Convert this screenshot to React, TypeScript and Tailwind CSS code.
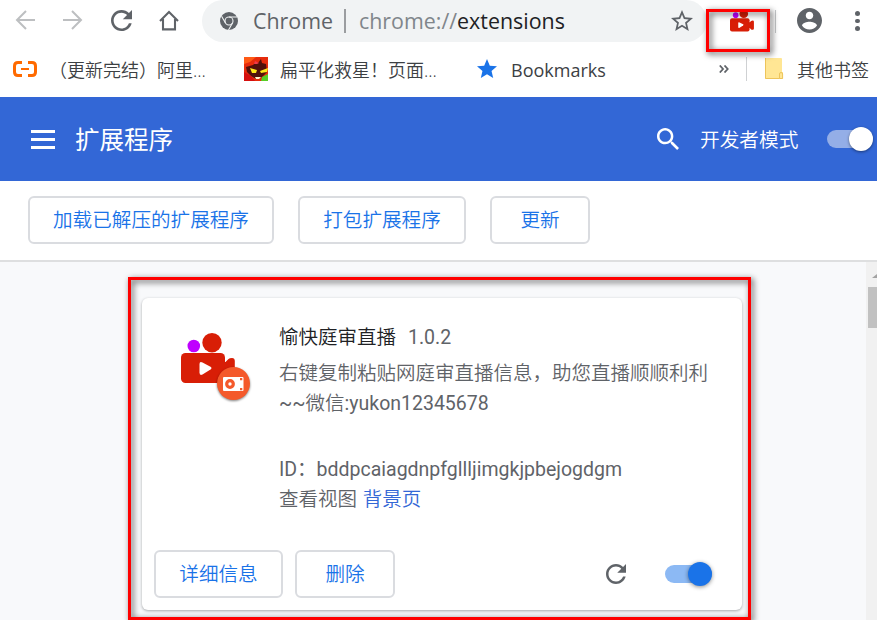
import React from 'react';

const CJK = "font-['Roboto','Noto_Sans_CJK_SC',sans-serif]";
const UI = "font-['Open_Sans','Noto_Sans_CJK_SC',sans-serif]";

function Camera({ className }: { className: string }) {
  return (
    <svg className={className} viewBox="0 0 54 50">
      <circle cx="12.8" cy="13" r="6.3" fill="#bf00ff" />
      <circle cx="31" cy="9.7" r="9.7" fill="#d81e06" />
      <rect x="0" y="20" width="44" height="30" rx="4.5" fill="#d81e06" />
      <path d="M42 29H44.5L47.5 26Q48.5 25 51 25Q53.8 25 53.8 28V43Q53.8 46 51 46Q48.5 46 47.5 45L44.5 42H42Z" fill="#d81e06" />
      <path d="M18.5 31Q18.5 28 21.5 29.4L29.5 33.7Q31.5 35 29.5 36.5L21.5 41.5Q18.5 43 18.5 39.5Z" fill="#fff" />
    </svg>
  );
}

function Reload({ className }: { className: string }) {
  return (
    <svg className={className} viewBox="4 4 16 16" fill="#5f6368">
      <path d="M17.65 6.35C16.2 4.9 14.21 4 12 4c-4.42 0-7.99 3.58-7.99 8s3.57 8 7.99 8c3.73 0 6.84-2.55 7.73-6h-2.08c-.82 2.33-3.04 4-5.65 4-3.31 0-6-2.69-6-6s2.69-6 6-6c1.66 0 3.14.69 4.22 1.78L13 11h7V4l-2.35 2.35z" />
    </svg>
  );
}

function Arrow({ className }: { className: string }) {
  return (
    <svg className={className} viewBox="0 0 20 20" fill="none" stroke="#bdbfc1" strokeWidth="2">
      <path d="M20 10H2M11 1L2 10L11 19" />
    </svg>
  );
}

function Toolbar() {
  return (
    <div className="relative flex h-[42px] w-full items-start">
      <Arrow className="ml-[15px] mt-[10px] h-5 w-5 shrink-0" />
      <Arrow className="ml-[28px] mt-[10px] h-5 w-5 shrink-0 rotate-180" />
      <Reload className="ml-[28px] mt-[10px] h-[21px] w-[21px] shrink-0" />
      <svg className="ml-[27px] mt-[10px] h-[21px] w-[20px] shrink-0" viewBox="0 0 20 21" fill="none" stroke="#5f6368" strokeWidth="2.1">
        <path d="M1 11L10 2L19 11M4 9V19.4H16V9" />
      </svg>
      <div className="ml-[23px] flex h-[42px] w-[505px] shrink-0 items-start rounded-r-[21px] rounded-l-[21px] bg-[#f1f3f4]">
        <svg className="ml-[18px] mt-[12px] h-[18px] w-[18px] shrink-0" viewBox="0 0 18 18">
          <circle cx="9" cy="9" r="9" fill="#5f6368" />
          <g fill="none" stroke="#f1f3f4" strokeWidth="1.1">
            <circle cx="9" cy="9" r="4" />
            <path d="M9 5H17M5.5 11L1.6 4.2M12.5 11L8.5 18" />
          </g>
        </svg>
        <span className={`${UI} ml-[15px] mt-[6px] w-[80px] shrink-0 whitespace-nowrap text-[21.4px] leading-[30px] text-[#5f6368]`}>Chrome</span>
        <div className="ml-[11px] mt-[9px] h-[24px] w-[2px] shrink-0 bg-[#9b9da0]" />
        <span className={`${UI} ml-[13px] mt-[6px] w-[220px] shrink-0 whitespace-nowrap text-[21.4px] leading-[30px] text-[#80868b]`}>
          chrome://<span className="text-[#202124]">extensions</span>
        </span>
        <svg className="ml-[92px] mt-[10px] h-[21px] w-[22px] shrink-0" viewBox="2 2 20 19" fill="#5f6368">
          <path d="M22 9.24l-7.19-.62L12 2 9.19 8.63 2 9.24l5.46 4.73L5.82 21 12 17.27 18.18 21l-1.63-7.03L22 9.24zM12 15.4l-3.76 2.27 1-4.28-3.32-2.88 4.38-.38L12 6.1l1.71 4.04 4.38.38-3.32 2.88 1 4.28L12 15.4z" />
        </svg>
      </div>
      <Camera className="ml-[23px] mt-[9px] h-[23px] w-[24px] shrink-0" />
      <div className="ml-[21px] mt-[10px] h-[23px] w-px shrink-0 bg-[#c6c8ca]" />
      <svg className="ml-[21px] mt-[8px] h-[25px] w-[25px] shrink-0" viewBox="2 2 20 20" fill="#5f6368">
        <path d="M12 2C6.48 2 2 6.48 2 12s4.48 10 10 10 10-4.48 10-10S17.52 2 12 2zm0 3c1.66 0 3 1.34 3 3s-1.34 3-3 3-3-1.34-3-3 1.34-3 3-3zm0 14.2c-2.5 0-4.71-1.28-6-3.22.03-1.99 4-3.08 6-3.08 1.99 0 5.97 1.09 6 3.08-1.29 1.94-3.5 3.22-6 3.22z" />
      </svg>
      <div className="ml-[33px] mt-[11px] flex shrink-0 flex-col gap-[3px]">
        <i className="h-[4.5px] w-[4.5px] rounded-full bg-[#5f6368]" />
        <i className="h-[4.5px] w-[4.5px] rounded-full bg-[#5f6368]" />
        <i className="h-[4.5px] w-[4.5px] rounded-full bg-[#5f6368]" />
      </div>
      <div className="absolute left-[706px] top-[9px] z-10 h-[43px] w-[64px] border-[3px] border-[#ff0000] drop-shadow-[2px_2px_3px_rgba(0,0,0,0.75)]" />
    </div>
  );
}

function Bookmarks() {
  const text = `${UI} shrink-0 whitespace-nowrap text-[18px] leading-[28px] text-[#3c4043]`;
  return (
    <div className="flex h-[55px] w-full items-start">
      <svg className="ml-[13px] mt-[19px] h-[16px] w-[24px] shrink-0" viewBox="0 0 24 16" fill="none" stroke="#ff6a00">
        <path d="M9 1.5H5Q1.5 1.5 1.5 5V11Q1.5 14.5 5 14.5H9M15 1.5H19Q22.5 1.5 22.5 5V11Q22.5 14.5 19 14.5H15" strokeWidth="3" />
        <path d="M8 8H16" strokeWidth="2" />
      </svg>
      <span className={`${text} ml-[12px] mt-[14px] w-[159px] font-[350]`}>（更新完结）阿里...</span>
      <svg className="ml-[36px] mt-[15px] h-6 w-6 shrink-0" viewBox="0 0 24 24">
        <rect width="24" height="24" fill="#e62b0c" />
        <path d="M0 0H12L6 5L0 7Z" fill="#ff5a16" />
        <path d="M2 10L9 8L12 5L14 6L17 2L18 6L22 7L23 15L18 20L12 22L7 19L3 15Z" fill="#50100b" />
        <path d="M11 4L15 6L13 7L10 7Z" fill="#ef3b4a" />
        <path d="M6 11L13 13L12 16L8 16ZM24 11L16 14L17 16L23 15Z" fill="#ffe819" />
        <path d="M0 15L7 19L11 24H0Z" fill="#d50f0e" />
        <path d="M11 20H17L15 22H12Z" fill="#fff3d0" />
        <path d="M18 20L24 17V24H17Z" fill="#57ce25" />
      </svg>
      <span className={`${text} ml-[12px] mt-[14px] w-[160px] font-[350]`}>扁平化救星！页面...</span>
      <svg className="ml-[37px] mt-[17px] h-[19px] w-[20px] shrink-0" viewBox="2 2 20 19" fill="#1a73e8">
        <path d="M12 17.27L18.18 21l-1.64-7.03L22 9.24l-7.19-.61L12 2 9.19 8.63 2 9.24l5.46 4.73L5.82 21z" />
      </svg>
      <span className={`${text} ml-[14px] mt-[14px] w-[96px]`}>Bookmarks</span>
      <svg className="ml-[112px] mt-[23px] h-[8px] w-[10px] shrink-0" viewBox="0 0 10 8" fill="none" stroke="#5f6368" strokeWidth="1.8">
        <path d="M.8 .5L4 4L.8 7.5M5.5 .5L8.7 4L5.5 7.5" />
      </svg>
      <div className="ml-[17px] mt-[15px] h-6 w-px shrink-0 bg-[#cfd1d3]" />
      <svg className="ml-[18px] mt-[16px] h-[22px] w-[19px] shrink-0" viewBox="0 0 19 22">
        <path d="M0 1Q0 0 1 0H16Q17 0 17 1V14H18V21H1Q0 21 0 20Z" fill="#ffe694" />
        <path d="M.5 0V20.5H14.5V16Q14.5 14.5 16 14.5Q17.6 14.5 17.6 16V20.5H14.5" fill="none" stroke="#edc45b" />
      </svg>
      <span className={`${text} ml-[13px] mt-[14px] font-[350]`}>其他书签</span>
    </div>
  );
}

function Button({ className, children }: { className: string; children: React.ReactNode }) {
  return (
    <button className={`flex h-[48px] shrink-0 items-center justify-center whitespace-nowrap rounded-[6px] border-2 border-[#dadce0] pt-[2px] text-[19.6px] font-[350] leading-[28px] text-[#1a73e8] ${className}`}>
      {children}
    </button>
  );
}

function Card() {
  return (
    <div className="relative ml-[142px] mt-[36px] flex h-[312px] w-[600px] shrink-0 flex-col rounded-[6px] bg-white shadow-[0_1px_3px_rgba(60,64,67,0.45)]">
      <div className="flex h-[252px] items-start">
        <div className="relative ml-[39px] mt-[35px] h-[70px] w-[70px] shrink-0">
          <Camera className="h-[50px] w-[54px]" />
          <svg className="absolute left-[36px] top-[34px] h-[33px] w-[33px] overflow-visible drop-shadow-[0_1px_1px_rgba(0,0,0,0.5)]" viewBox="0 0 33 33">
            <circle cx="16.5" cy="16.5" r="16.5" fill="#f4592b" />
            <rect x="6" y="10" width="20.5" height="14" rx="1" fill="#fff" />
            <circle cx="13" cy="17" r="3.3" fill="none" stroke="#f4592b" strokeWidth="3.2" />
            <path d="M23 11h2.3v2.3H23zM23 21h2.3v2.3H23z" fill="#f4592b" />
          </svg>
        </div>
        <div className="ml-[28px] mt-[25px] flex flex-col whitespace-nowrap text-[19.5px] leading-[30px] text-[#5f6368]">
          <div className="flex h-[36px]">
            <span className="font-[350] text-[#202124]">愉快庭审直播</span>
            <span className="ml-[12px]">1.0.2</span>
          </div>
          <div className="font-[350]">右键复制粘贴网庭审直播信息，助您直播顺顺利利</div>
          <div>~~<span className="font-[350]">微信</span>:yukon12345678</div>
          <div className="mt-[36px]">ID：bddpcaiagdnpfgllljimgkjpbejogdgm</div>
          <div className="font-[350]">查看视图 <a className="ml-px text-[#3367d6]">背景页</a></div>
        </div>
      </div>
      <div className="flex h-[48px] items-center">
        <Button className="ml-[12px] w-[129px]">详细信息</Button>
        <Button className="ml-[12px] w-[100px]">删除</Button>
        <Reload className="ml-[211px] h-5 w-5 shrink-0" />
        <div className="ml-[39px] flex h-[18px] w-[47px] shrink-0 items-center justify-end rounded-full bg-[#8cb9f4]">
          <div className="h-6 w-6 shrink-0 rounded-full bg-[#1a73e8] shadow-[0_1px_4px_rgba(0,0,0,0.45)]" />
        </div>
      </div>
    </div>
  );
}

export default function App() {
  return (
    <div className={`${CJK} flex h-[620px] w-[877px] flex-col overflow-hidden bg-white`}>
      <Toolbar />
      <Bookmarks />
      <header className="flex h-[84px] shrink-0 items-center bg-[#3367d6] text-white">
        <div className="ml-[31px] flex w-6 shrink-0 flex-col gap-[5px]">
          <i className="h-[3px] bg-white" />
          <i className="h-[3px] bg-white" />
          <i className="h-[3px] bg-white" />
        </div>
        <h1 className="ml-[20px] w-[99px] shrink-0 whitespace-nowrap pt-[4px] text-[24.5px] leading-[36px]">扩展程序</h1>
        <svg className="ml-[483px] h-[22px] w-[22px] shrink-0" viewBox="3 3 17.5 17.5" fill="white">
          <path d="M15.5 14h-.79l-.28-.27C15.41 12.59 16 11.11 16 9.5 16 5.91 13.09 3 9.5 3S3 5.91 3 9.5 5.91 16 9.5 16c1.61 0 3.09-.59 4.23-1.57l.27.28v.79l5 4.99L20.49 19l-4.99-5zm-6 0C7.01 14 5 11.99 5 9.5S7.01 5 9.5 5 14 7.01 14 9.5 11.99 14 9.5 14z" />
        </svg>
        <span className="ml-[21px] w-[98px] shrink-0 whitespace-nowrap pt-[3px] text-[19.7px] font-[350] leading-[28px]">开发者模式</span>
        <div className="ml-[29px] flex h-[18px] w-[46px] shrink-0 items-center justify-end rounded-full bg-[#94aee7]">
          <div className="h-6 w-6 shrink-0 rounded-full bg-white shadow-[0_1px_3px_rgba(0,0,0,0.45)]" />
        </div>
      </header>
      <div className="flex h-[81px] shrink-0 items-start border-b-2 border-[#dedfe0] pt-[15px]">
        <Button className="ml-[28px] w-[246px]">加载已解压的扩展程序</Button>
        <Button className="ml-[24px] w-[168px]">打包扩展程序</Button>
        <Button className="ml-[24px] w-[100px]">更新</Button>
      </div>
      <main className="relative flex h-[358px] shrink-0 items-start bg-[#f8f9fb]">
        <Card />
        <div className="absolute left-[128px] top-[15px] h-[343px] w-[623px] border-[3px] border-[#ff0000] drop-shadow-[2px_2px_3px_rgba(0,0,0,0.75)]" />
        <div className="ml-auto flex h-full w-[11px] shrink-0 flex-col overflow-hidden bg-[#f1f1f1]">
          <svg className="ml-[6px] mt-[12px] h-[4px] w-[10px] shrink-0" viewBox="0 0 10 4"><path d="M0 4L5 0L10 4Z" fill="#a3a3a3" /></svg>
          <div className="ml-[2px] mt-[9px] h-[41px] w-[9px] shrink-0 bg-[#c1c1c1]" />
        </div>
      </main>
    </div>
  );
}
